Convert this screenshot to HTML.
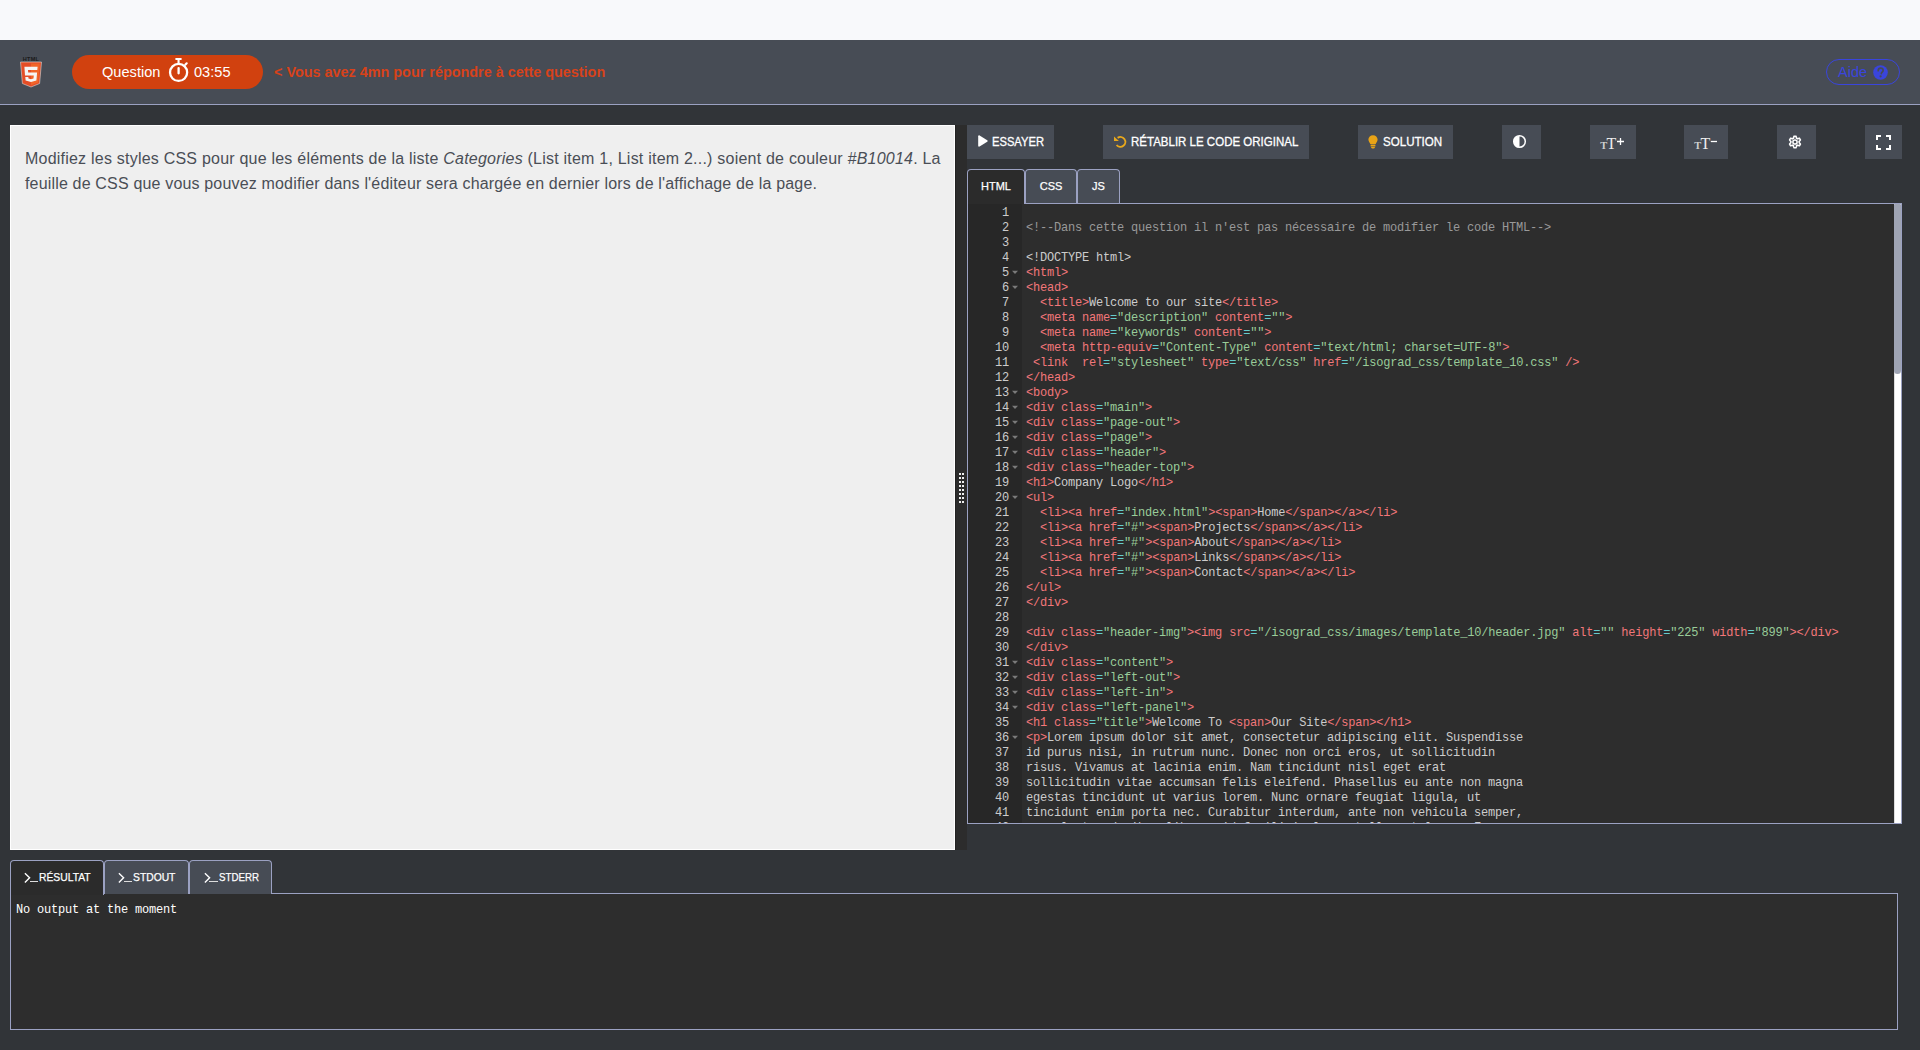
<!DOCTYPE html>
<html><head><meta charset="utf-8">
<style>
*{box-sizing:border-box;margin:0;padding:0}
html,body{width:1920px;height:1050px;overflow:hidden}
body{background:#313438;font-family:"Liberation Sans",sans-serif;position:relative}
.abs{position:absolute}
svg{position:absolute;overflow:visible}
#topstrip{left:0;top:0;width:1920px;height:40px;background:#f8f9fb}
#hdr{left:0;top:40px;width:1920px;height:65px;background:#474c55;border-bottom:1px solid #9ba1c2}
#qbtn{left:72px;top:55px;width:191px;height:34px;border-radius:17px;background:#d1410f;color:#fff;font-size:14.6px}
#qbtn span{position:absolute;top:0;line-height:34px;white-space:nowrap}
#qmsg{left:274px;top:55px;line-height:34px;color:#d8421a;font-weight:bold;font-size:14.4px;white-space:nowrap}
#aide{left:1826px;top:59px;width:74px;height:26px;border:1px solid #3a45dc;border-radius:13px;color:#3a45dc;font-size:14.5px}
#aide span{position:absolute;left:11px;top:0;line-height:24px}
#left{left:10px;top:125px;width:945px;height:725px;background:#efefef;border:1px solid #fff}
#qtext{left:14px;top:20px;color:#4a4e56;font-size:16px;line-height:25px;white-space:nowrap}
#split{left:955px;top:125px;width:12px;height:725px;background:#2c2c2c;border-left:1px solid #232323}
.grip{position:absolute;width:2px;height:2px;background:#eee}
.btn{position:absolute;top:125px;height:34px;background:#474c55;color:#fff;font-size:13px}
.btn .lbl{position:absolute;top:0;line-height:34px;white-space:nowrap;transform-origin:0 50%;-webkit-text-stroke:0.3px #fff}
.tab{position:absolute;z-index:2;top:169px;height:35px;border:1px solid #9ba1c2;border-bottom:none;border-radius:4px 4px 0 0;background:#474c55;color:#fff;font-size:11px;text-align:center;line-height:33px;-webkit-text-stroke:0.25px #fff}
.tab.act{background:#2b2b2b}
#editor{left:967px;top:203px;width:935px;height:621px;border:1px solid #9ba1c2;border-top-color:#9ba1c2;background:#2d2d2d;overflow:hidden}
#gutter{left:0;top:0;width:54px;height:100%;background:#272727}
#gl{position:absolute;left:0;top:2px;width:54px}
.gn{position:relative;height:15px;line-height:15px;text-align:right;padding-right:13px;color:#ccc;font-family:"Liberation Mono",monospace;font-size:12px;letter-spacing:-0.2px;transform:scaleY(1.12)}
.fw{position:absolute;right:4px;top:4.6px;width:0;height:0;border-left:3px solid transparent;border-right:3px solid transparent;border-top:3px solid #7a7a7a}
#code{left:58px;top:2px;font-family:"Liberation Mono",monospace;font-size:12px;letter-spacing:-0.2px;color:#ccc;white-space:pre}
.ln{height:15px;line-height:15px;transform:scaleY(1.12)}
.t{color:#f2777a}.s{color:#99cc99}.o{color:#66cccc}.c{color:#999}
#sb{left:926px;top:0;width:7px;height:619px;background:#fff;border-left:1px solid #ddd}
#sbt{left:926px;top:0;width:7px;height:170px;border-radius:1px 1px 3.5px 3.5px;background:#9fa4b3}
#out{left:10px;top:893px;width:1888px;height:137px;border:1px solid #9ba1c2;background:#2d2d2d}
#outtxt{left:5px;top:9px;font-family:"Liberation Mono",monospace;font-size:12px;letter-spacing:-0.2px;color:#fff;transform:scaleY(1.12);white-space:pre}
.otab{position:absolute;z-index:2;top:860px;height:34px;border:1px solid #9ba1c2;border-bottom:none;border-radius:4px 4px 0 0;background:#474c55;color:#fff;font-size:11.5px;line-height:33px;white-space:nowrap}
.otab.act{background:#2b2b2b;height:35px}
.otab span{position:absolute;top:-1px;-webkit-text-stroke:0.25px #fff;transform-origin:0 50%;font-size:11.6px}
.us{position:absolute;top:20px;width:8.3px;height:1.4px;background:#ddd}
</style></head>
<body>
<div id="topstrip" class="abs"></div>
<div id="hdr" class="abs"></div>
<!-- html5 logo -->
<svg style="left:20px;top:56px" width="22" height="32" viewBox="0 0 22 32">
  <text x="11" y="5.2" text-anchor="middle" font-family="Liberation Sans" font-weight="bold" font-size="5.5" fill="#1a1a1a" letter-spacing="0.3">HTML</text>
  <path d="M0.5 6 L21.5 6 L19.6 27.5 L11 31 L2.4 27.5 Z" fill="#e44d26" stroke="#d8d8d8" stroke-width="0.6"/>
  <path d="M11 7.6 L19.8 7.6 L18.2 26.4 L11 29.2 Z" fill="#f16529"/>
  <path d="M4.4 10.8 L17.6 10.8 L17.3 14 L8 14 L8.2 16.6 L17.1 16.6 L16.4 24.4 L11 26 L5.6 24.4 L5.3 21 L8.3 21 L8.5 22.5 L11 23.2 L13.5 22.5 L13.8 19.6 L5 19.6 Z" fill="#f5f5f5"/>
</svg>
<div id="qbtn" class="abs">
  <span style="left:30px">Question</span>
  <svg style="left:96px;top:0" width="22" height="34" viewBox="0 0 22 34">
    <circle cx="10.6" cy="17.4" r="8.55" fill="none" stroke="#fff" stroke-width="2.3"/>
    <rect x="7.3" y="2.9" width="6.4" height="2" rx="0.6" fill="#fff"/>
    <rect x="9.5" y="4.5" width="2.1" height="4.5" fill="#fff"/>
    <path d="M17.3 9.7 L18.7 8.3" stroke="#fff" stroke-width="2.2" stroke-linecap="round"/>
    <rect x="9.45" y="12" width="2.3" height="7.4" rx="1.1" fill="#fff"/>
  </svg>
  <span style="left:122px">03:55</span>
</div>
<div id="qmsg" class="abs">&lt; Vous avez 4mn pour répondre à cette question</div>
<div id="aide" class="abs"><span>Aide</span>
  <svg style="left:46px;top:5px" width="15" height="15" viewBox="0 0 15 15">
    <circle cx="7.5" cy="7.5" r="7.3" fill="#3a45dc"/>
    <path d="M5.2 5.7 C5.2 4.1 6.3 3.2 7.6 3.2 C9 3.2 10.1 4.1 10.1 5.5 C10.1 7.1 8.3 7.3 8.3 8.6" fill="none" stroke="#474c55" stroke-width="1.7" stroke-linecap="round"/><circle cx="7.6" cy="11.3" r="1.1" fill="#474c55"/>
  </svg>
</div>
<div id="left" class="abs">
  <div id="qtext" class="abs"><span style="letter-spacing:0.22px">Modifiez les styles CSS pour que les éléments de la liste <i>Categories</i> (List item 1, List item 2...) soient de couleur <i>#B10014</i>. La</span><br><span style="letter-spacing:0.17px">feuille de CSS que vous pouvez modifier dans l'éditeur sera chargée en dernier lors de l'affichage de la page.</span></div>
</div>
<div id="split" class="abs"></div><div class="grip" style="left:959px;top:473px"></div><div class="grip" style="left:962px;top:473px"></div><div class="grip" style="left:959px;top:477px"></div><div class="grip" style="left:962px;top:477px"></div><div class="grip" style="left:959px;top:481px"></div><div class="grip" style="left:962px;top:481px"></div><div class="grip" style="left:959px;top:485px"></div><div class="grip" style="left:962px;top:485px"></div><div class="grip" style="left:959px;top:489px"></div><div class="grip" style="left:962px;top:489px"></div><div class="grip" style="left:959px;top:493px"></div><div class="grip" style="left:962px;top:493px"></div><div class="grip" style="left:959px;top:497px"></div><div class="grip" style="left:962px;top:497px"></div><div class="grip" style="left:959px;top:501px"></div><div class="grip" style="left:962px;top:501px"></div>
<!-- toolbar -->
<div class="btn" style="left:967px;width:87px">
  <svg style="left:10px;top:10px" width="11" height="12" viewBox="0 0 11 12"><path d="M1.2 1.2 C1.2 0.4 1.9 0 2.6 0.4 L10.2 5.2 C10.8 5.6 10.8 6.4 10.2 6.8 L2.6 11.6 C1.9 12 1.2 11.6 1.2 10.8 Z" fill="#fff"/></svg>
  <span class="lbl" style="left:25px;transform:scaleX(0.86)">ESSAYER</span>
</div>
<div class="btn" style="left:1103px;width:206px">
  <svg style="left:11px;top:11px" width="14" height="14" viewBox="0 0 14 14"><path d="M3.6 1.9 A4.9 4.9 0 1 1 2.6 9" fill="none" stroke="#e9a81c" stroke-width="1.9"/><path d="M0 0.4 L0 5 L4.9 5 Z" fill="#e9a81c"/></svg>
  <span class="lbl" style="left:28px;transform:scaleX(0.885)">RÉTABLIR LE CODE ORIGINAL</span>
</div>
<div class="btn" style="left:1358px;width:95px">
  <svg style="left:10px;top:10px" width="10" height="14" viewBox="0 0 10 14"><path d="M5 0.2 C7.6 0.2 9.6 2.2 9.6 4.6 C9.6 6.6 8.2 7.6 7.6 9.2 L2.4 9.2 C1.8 7.6 0.4 6.6 0.4 4.6 C0.4 2.2 2.4 0.2 5 0.2 Z" fill="#e8a317"/><rect x="2.6" y="9.8" width="4.8" height="1.6" rx="0.5" fill="#e8a317"/><path d="M3 12 L7 12 C6.8 13.2 6 13.6 5 13.6 C4 13.6 3.2 13.2 3 12 Z" fill="#e8a317"/></svg>
  <span class="lbl" style="left:25px;transform:scaleX(0.89)">SOLUTION</span>
</div>
<div class="btn" style="left:1502px;width:39px">
  <svg style="left:11px;top:10px" width="14" height="14" viewBox="0 0 14 14"><circle cx="6.5" cy="6.5" r="5.8" fill="none" stroke="#fff" stroke-width="1.5"/><path d="M6.5 0.7 A5.8 5.8 0 0 0 6.5 12.3 Z" fill="#fff"/></svg>
</div>
<div class="btn" style="left:1590px;width:46px">
  <svg style="left:0;top:0" width="46" height="34" viewBox="0 0 46 34">
    <text x="10.3" y="24" font-family="Liberation Serif" font-weight="bold" font-size="10.5" fill="#d0d0d0">T</text>
    <text x="16.5" y="24" font-family="Liberation Serif" font-size="16" fill="#eee">T</text>
    <path d="M27 16.5 L34 16.5 M30.5 13 L30.5 20" stroke="#fff" stroke-width="1.3"/>
  </svg>
</div>
<div class="btn" style="left:1684px;width:44px">
  <svg style="left:0;top:0" width="44" height="34" viewBox="0 0 44 34">
    <text x="10.3" y="24" font-family="Liberation Serif" font-weight="bold" font-size="10.5" fill="#d0d0d0">T</text>
    <text x="16.5" y="24" font-family="Liberation Serif" font-size="16" fill="#eee">T</text>
    <path d="M26.8 16.5 L33 16.5" stroke="#fff" stroke-width="1.3"/>
  </svg>
</div>
<div class="btn" style="left:1777px;width:39px">
  <svg style="left:10.5px;top:9.5px" width="14" height="14" viewBox="-7 -7 14 14">
    <path d="M0.00 -5.75 L0.15 -5.75 L0.30 -5.74 L0.45 -5.73 L0.60 -5.72 L0.75 -5.70 L0.90 -5.68 L1.02 -5.51 L1.12 -5.28 L1.21 -5.03 L1.28 -4.78 L1.34 -4.53 L1.39 -4.28 L1.43 -4.05 L1.49 -3.87 L1.59 -3.83 L1.69 -3.79 L1.79 -3.75 L1.88 -3.70 L1.98 -3.65 L2.07 -3.59 L2.17 -3.54 L2.26 -3.48 L2.35 -3.42 L2.44 -3.36 L2.53 -3.29 L2.61 -3.23 L2.79 -3.27 L3.01 -3.35 L3.25 -3.43 L3.50 -3.50 L3.75 -3.56 L4.01 -3.61 L4.26 -3.64 L4.47 -3.62 L4.56 -3.50 L4.65 -3.38 L4.74 -3.26 L4.82 -3.13 L4.90 -3.00 L4.98 -2.88 L5.05 -2.74 L5.12 -2.61 L5.19 -2.48 L5.25 -2.34 L5.31 -2.20 L5.37 -2.06 L5.28 -1.87 L5.13 -1.67 L4.96 -1.47 L4.78 -1.28 L4.59 -1.10 L4.41 -0.94 L4.22 -0.78 L4.10 -0.65 L4.11 -0.54 L4.13 -0.43 L4.14 -0.33 L4.14 -0.22 L4.15 -0.11 L4.15 -0.00 L4.15 0.11 L4.14 0.22 L4.14 0.33 L4.13 0.43 L4.11 0.54 L4.10 0.65 L4.22 0.78 L4.41 0.94 L4.59 1.10 L4.78 1.28 L4.96 1.47 L5.13 1.67 L5.28 1.87 L5.37 2.06 L5.31 2.20 L5.25 2.34 L5.19 2.48 L5.12 2.61 L5.05 2.74 L4.98 2.87 L4.90 3.00 L4.82 3.13 L4.74 3.26 L4.65 3.38 L4.56 3.50 L4.47 3.62 L4.26 3.64 L4.01 3.61 L3.75 3.56 L3.50 3.50 L3.25 3.43 L3.01 3.35 L2.79 3.27 L2.61 3.23 L2.53 3.29 L2.44 3.36 L2.35 3.42 L2.26 3.48 L2.17 3.54 L2.07 3.59 L1.98 3.65 L1.88 3.70 L1.79 3.75 L1.69 3.79 L1.59 3.83 L1.49 3.87 L1.43 4.05 L1.39 4.28 L1.34 4.53 L1.28 4.78 L1.21 5.03 L1.12 5.28 L1.02 5.51 L0.90 5.68 L0.75 5.70 L0.60 5.72 L0.45 5.73 L0.30 5.74 L0.15 5.75 L0.00 5.75 L-0.15 5.75 L-0.30 5.74 L-0.45 5.73 L-0.60 5.72 L-0.75 5.70 L-0.90 5.68 L-1.02 5.51 L-1.12 5.28 L-1.21 5.03 L-1.28 4.78 L-1.34 4.53 L-1.39 4.28 L-1.43 4.05 L-1.49 3.87 L-1.59 3.83 L-1.69 3.79 L-1.79 3.75 L-1.88 3.70 L-1.98 3.65 L-2.07 3.59 L-2.17 3.54 L-2.26 3.48 L-2.35 3.42 L-2.44 3.36 L-2.53 3.29 L-2.61 3.23 L-2.79 3.27 L-3.01 3.35 L-3.25 3.43 L-3.50 3.50 L-3.75 3.56 L-4.01 3.61 L-4.26 3.64 L-4.47 3.62 L-4.56 3.50 L-4.65 3.38 L-4.74 3.26 L-4.82 3.13 L-4.90 3.00 L-4.98 2.88 L-5.05 2.74 L-5.12 2.61 L-5.19 2.48 L-5.25 2.34 L-5.31 2.20 L-5.37 2.06 L-5.28 1.87 L-5.13 1.67 L-4.96 1.47 L-4.78 1.28 L-4.59 1.10 L-4.41 0.94 L-4.22 0.78 L-4.10 0.65 L-4.11 0.54 L-4.13 0.43 L-4.14 0.33 L-4.14 0.22 L-4.15 0.11 L-4.15 0.00 L-4.15 -0.11 L-4.14 -0.22 L-4.14 -0.33 L-4.13 -0.43 L-4.11 -0.54 L-4.10 -0.65 L-4.22 -0.78 L-4.41 -0.94 L-4.59 -1.10 L-4.78 -1.28 L-4.96 -1.47 L-5.13 -1.67 L-5.28 -1.87 L-5.37 -2.06 L-5.31 -2.20 L-5.25 -2.34 L-5.19 -2.48 L-5.12 -2.61 L-5.05 -2.74 L-4.98 -2.88 L-4.90 -3.00 L-4.82 -3.13 L-4.74 -3.26 L-4.65 -3.38 L-4.56 -3.50 L-4.47 -3.62 L-4.26 -3.64 L-4.01 -3.61 L-3.75 -3.56 L-3.50 -3.50 L-3.25 -3.43 L-3.01 -3.35 L-2.79 -3.27 L-2.61 -3.23 L-2.53 -3.29 L-2.44 -3.36 L-2.35 -3.42 L-2.26 -3.48 L-2.17 -3.54 L-2.07 -3.59 L-1.98 -3.65 L-1.88 -3.70 L-1.79 -3.75 L-1.69 -3.79 L-1.59 -3.83 L-1.49 -3.87 L-1.43 -4.05 L-1.39 -4.28 L-1.34 -4.53 L-1.28 -4.78 L-1.21 -5.03 L-1.12 -5.28 L-1.02 -5.51 L-0.90 -5.68 L-0.75 -5.70 L-0.60 -5.72 L-0.45 -5.73 L-0.30 -5.74 L-0.15 -5.75 Z" fill="none" stroke="#fff" stroke-width="1.6"/>
    <circle cx="0" cy="0" r="2.1" fill="none" stroke="#fff" stroke-width="1.5"/>
  </svg>
</div>
<div class="btn" style="left:1865px;width:37px">
  <svg style="left:11px;top:10px" width="15" height="15" viewBox="0 0 15 15" fill="#fff">
    <path d="M0 0 H5 V2 H2 V5 H0 Z"/><path d="M15 0 H10 V2 H13 V5 H15 Z"/><path d="M0 15 H5 V13 H2 V10 H0 Z"/><path d="M15 15 H10 V13 H13 V10 H15 Z"/>
  </svg>
</div>
<div class="tab act" style="left:967px;width:58px">HTML</div>
<div class="tab" style="left:1025px;width:52px;height:34px">CSS</div>
<div class="tab" style="left:1077px;width:43px;height:34px">JS</div>
<div id="editor" class="abs"><div id="gutter" class="abs"><div id="gl"><div class="gn">1</div><div class="gn">2</div><div class="gn">3</div><div class="gn">4</div><div class="gn">5<b class="fw"></b></div><div class="gn">6<b class="fw"></b></div><div class="gn">7</div><div class="gn">8</div><div class="gn">9</div><div class="gn">10</div><div class="gn">11</div><div class="gn">12</div><div class="gn">13<b class="fw"></b></div><div class="gn">14<b class="fw"></b></div><div class="gn">15<b class="fw"></b></div><div class="gn">16<b class="fw"></b></div><div class="gn">17<b class="fw"></b></div><div class="gn">18<b class="fw"></b></div><div class="gn">19</div><div class="gn">20<b class="fw"></b></div><div class="gn">21</div><div class="gn">22</div><div class="gn">23</div><div class="gn">24</div><div class="gn">25</div><div class="gn">26</div><div class="gn">27</div><div class="gn">28</div><div class="gn">29</div><div class="gn">30</div><div class="gn">31<b class="fw"></b></div><div class="gn">32<b class="fw"></b></div><div class="gn">33<b class="fw"></b></div><div class="gn">34<b class="fw"></b></div><div class="gn">35</div><div class="gn">36<b class="fw"></b></div><div class="gn">37</div><div class="gn">38</div><div class="gn">39</div><div class="gn">40</div><div class="gn">41</div><div class="gn">42</div></div></div><div id="code" class="abs"><div class="ln"></div><div class="ln"><span class="c">&lt;!--Dans cette question il n'est pas nécessaire de modifier le code HTML--&gt;</span></div><div class="ln"></div><div class="ln">&lt;!DOCTYPE html&gt;</div><div class="ln"><span class="t">&lt;html</span><span class="t">&gt;</span></div><div class="ln"><span class="t">&lt;head</span><span class="t">&gt;</span></div><div class="ln">  <span class="t">&lt;title</span><span class="t">&gt;</span>Welcome to our site<span class="t">&lt;/title</span><span class="t">&gt;</span></div><div class="ln">  <span class="t">&lt;meta</span> <span class="t">name</span><span class="o">=</span><span class="s">"description"</span> <span class="t">content</span><span class="o">=</span><span class="s">""</span><span class="t">&gt;</span></div><div class="ln">  <span class="t">&lt;meta</span> <span class="t">name</span><span class="o">=</span><span class="s">"keywords"</span> <span class="t">content</span><span class="o">=</span><span class="s">""</span><span class="t">&gt;</span></div><div class="ln">  <span class="t">&lt;meta</span> <span class="t">http-equiv</span><span class="o">=</span><span class="s">"Content-Type"</span> <span class="t">content</span><span class="o">=</span><span class="s">"text/html; charset=UTF-8"</span><span class="t">&gt;</span></div><div class="ln"> <span class="t">&lt;link</span>  <span class="t">rel</span><span class="o">=</span><span class="s">"stylesheet"</span> <span class="t">type</span><span class="o">=</span><span class="s">"text/css"</span> <span class="t">href</span><span class="o">=</span><span class="s">"/isograd_css/template_10.css"</span> <span class="t">/&gt;</span></div><div class="ln"><span class="t">&lt;/head</span><span class="t">&gt;</span></div><div class="ln"><span class="t">&lt;body</span><span class="t">&gt;</span></div><div class="ln"><span class="t">&lt;div</span> <span class="t">class</span><span class="o">=</span><span class="s">"main"</span><span class="t">&gt;</span></div><div class="ln"><span class="t">&lt;div</span> <span class="t">class</span><span class="o">=</span><span class="s">"page-out"</span><span class="t">&gt;</span></div><div class="ln"><span class="t">&lt;div</span> <span class="t">class</span><span class="o">=</span><span class="s">"page"</span><span class="t">&gt;</span></div><div class="ln"><span class="t">&lt;div</span> <span class="t">class</span><span class="o">=</span><span class="s">"header"</span><span class="t">&gt;</span></div><div class="ln"><span class="t">&lt;div</span> <span class="t">class</span><span class="o">=</span><span class="s">"header-top"</span><span class="t">&gt;</span></div><div class="ln"><span class="t">&lt;h1</span><span class="t">&gt;</span>Company Logo<span class="t">&lt;/h1</span><span class="t">&gt;</span></div><div class="ln"><span class="t">&lt;ul</span><span class="t">&gt;</span></div><div class="ln">  <span class="t">&lt;li</span><span class="t">&gt;</span><span class="t">&lt;a</span> <span class="t">href</span><span class="o">=</span><span class="s">"index.html"</span><span class="t">&gt;</span><span class="t">&lt;span</span><span class="t">&gt;</span>Home<span class="t">&lt;/span</span><span class="t">&gt;</span><span class="t">&lt;/a</span><span class="t">&gt;</span><span class="t">&lt;/li</span><span class="t">&gt;</span></div><div class="ln">  <span class="t">&lt;li</span><span class="t">&gt;</span><span class="t">&lt;a</span> <span class="t">href</span><span class="o">=</span><span class="s">"#"</span><span class="t">&gt;</span><span class="t">&lt;span</span><span class="t">&gt;</span>Projects<span class="t">&lt;/span</span><span class="t">&gt;</span><span class="t">&lt;/a</span><span class="t">&gt;</span><span class="t">&lt;/li</span><span class="t">&gt;</span></div><div class="ln">  <span class="t">&lt;li</span><span class="t">&gt;</span><span class="t">&lt;a</span> <span class="t">href</span><span class="o">=</span><span class="s">"#"</span><span class="t">&gt;</span><span class="t">&lt;span</span><span class="t">&gt;</span>About<span class="t">&lt;/span</span><span class="t">&gt;</span><span class="t">&lt;/a</span><span class="t">&gt;</span><span class="t">&lt;/li</span><span class="t">&gt;</span></div><div class="ln">  <span class="t">&lt;li</span><span class="t">&gt;</span><span class="t">&lt;a</span> <span class="t">href</span><span class="o">=</span><span class="s">"#"</span><span class="t">&gt;</span><span class="t">&lt;span</span><span class="t">&gt;</span>Links<span class="t">&lt;/span</span><span class="t">&gt;</span><span class="t">&lt;/a</span><span class="t">&gt;</span><span class="t">&lt;/li</span><span class="t">&gt;</span></div><div class="ln">  <span class="t">&lt;li</span><span class="t">&gt;</span><span class="t">&lt;a</span> <span class="t">href</span><span class="o">=</span><span class="s">"#"</span><span class="t">&gt;</span><span class="t">&lt;span</span><span class="t">&gt;</span>Contact<span class="t">&lt;/span</span><span class="t">&gt;</span><span class="t">&lt;/a</span><span class="t">&gt;</span><span class="t">&lt;/li</span><span class="t">&gt;</span></div><div class="ln"><span class="t">&lt;/ul</span><span class="t">&gt;</span></div><div class="ln"><span class="t">&lt;/div</span><span class="t">&gt;</span></div><div class="ln"></div><div class="ln"><span class="t">&lt;div</span> <span class="t">class</span><span class="o">=</span><span class="s">"header-img"</span><span class="t">&gt;</span><span class="t">&lt;img</span> <span class="t">src</span><span class="o">=</span><span class="s">"/isograd_css/images/template_10/header.jpg"</span> <span class="t">alt</span><span class="o">=</span><span class="s">""</span> <span class="t">height</span><span class="o">=</span><span class="s">"225"</span> <span class="t">width</span><span class="o">=</span><span class="s">"899"</span><span class="t">&gt;</span><span class="t">&lt;/div</span><span class="t">&gt;</span></div><div class="ln"><span class="t">&lt;/div</span><span class="t">&gt;</span></div><div class="ln"><span class="t">&lt;div</span> <span class="t">class</span><span class="o">=</span><span class="s">"content"</span><span class="t">&gt;</span></div><div class="ln"><span class="t">&lt;div</span> <span class="t">class</span><span class="o">=</span><span class="s">"left-out"</span><span class="t">&gt;</span></div><div class="ln"><span class="t">&lt;div</span> <span class="t">class</span><span class="o">=</span><span class="s">"left-in"</span><span class="t">&gt;</span></div><div class="ln"><span class="t">&lt;div</span> <span class="t">class</span><span class="o">=</span><span class="s">"left-panel"</span><span class="t">&gt;</span></div><div class="ln"><span class="t">&lt;h1</span> <span class="t">class</span><span class="o">=</span><span class="s">"title"</span><span class="t">&gt;</span>Welcome To <span class="t">&lt;span</span><span class="t">&gt;</span>Our Site<span class="t">&lt;/span</span><span class="t">&gt;</span><span class="t">&lt;/h1</span><span class="t">&gt;</span></div><div class="ln"><span class="t">&lt;p</span><span class="t">&gt;</span>Lorem ipsum dolor sit amet, consectetur adipiscing elit. Suspendisse</div><div class="ln">id purus nisi, in rutrum nunc. Donec non orci eros, ut sollicitudin</div><div class="ln">risus. Vivamus at lacinia enim. Nam tincidunt nisl eget erat</div><div class="ln">sollicitudin vitae accumsan felis eleifend. Phasellus eu ante non magna</div><div class="ln">egestas tincidunt ut varius lorem. Nunc ornare feugiat ligula, ut</div><div class="ln">tincidunt enim porta nec. Curabitur interdum, ante non vehicula semper,</div><div class="ln">urna lectus dapibus libero, id facilisis lacus tellus at lorem. Fusce</div></div><div id="sb" class="abs"></div><div id="sbt" class="abs"></div></div>
<div class="otab act" style="left:10px;width:94px"><svg style="left:13px;top:11px" width="7" height="11" viewBox="0 0 7 11"><path d="M0.9 1.2 L5.6 5.8 L0.9 10.4" fill="none" stroke="#fff" stroke-width="1.4"/></svg><div class="us" style="left:18.5px"></div><span style="left:28.3px;transform:scaleX(0.89)">RÉSULTAT</span></div>
<div class="otab" style="left:104px;width:85px"><svg style="left:13px;top:11px" width="7" height="11" viewBox="0 0 7 11"><path d="M0.9 1.2 L5.6 5.8 L0.9 10.4" fill="none" stroke="#fff" stroke-width="1.4"/></svg><div class="us" style="left:18.5px"></div><span style="left:28.3px;transform:scaleX(0.89)">STDOUT</span></div>
<div class="otab" style="left:189px;width:83px"><svg style="left:14px;top:11px" width="7" height="11" viewBox="0 0 7 11"><path d="M0.9 1.2 L5.6 5.8 L0.9 10.4" fill="none" stroke="#fff" stroke-width="1.4"/></svg><div class="us" style="left:19.3px"></div><span style="left:29.2px;transform:scaleX(0.84)">STDERR</span></div>
<div id="out" class="abs"><div id="outtxt" class="abs">No output at the moment</div></div>
</body></html>
